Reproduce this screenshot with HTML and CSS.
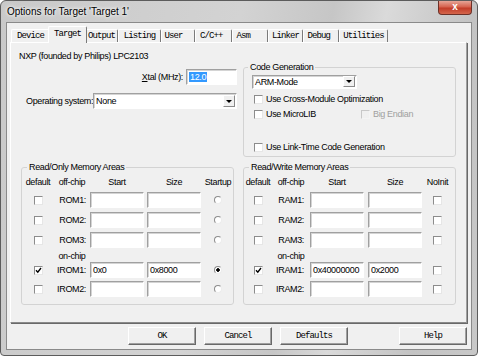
FILE: index.html
```html
<!DOCTYPE html>
<html lang="en">
<head>
  <meta charset="UTF-8">
  <meta name="viewport" content="width=device-width, initial-scale=1.0">
  <title>Options for Target 'Target 1'</title>
  <link rel="stylesheet" href="styles.css">
</head>
<body>
  <div class="window">
    <div class="titlebar">
      <span class="title">Options for Target 'Target 1'</span>
      <span class="close">x</span>
    </div>

    <div class="client">
      <div class="tabs">
        <span class="tab">Device</span>
        <span class="tab active">Target</span>
        <span class="tab">Output</span>
        <span class="tab">Listing</span>
        <span class="tab">User&nbsp;&nbsp;</span>
        <span class="tab">C/C++&nbsp;</span>
        <span class="tab">Asm&nbsp;&nbsp;&nbsp;</span>
        <span class="tab">Linker</span>
        <span class="tab">Debug&nbsp;</span>
        <span class="tab">Utilities</span>
      </div>

      <div class="panel">
        <div class="top">
          <div class="device">
            <div class="chip">NXP (founded by Philips) LPC2103</div>
            <div class="xtal-row">
              <label><u>X</u>tal (MHz):</label>
              <span class="edit xtal"><span class="sel">12.0</span></span>
            </div>
            <div class="os-row">
              <label>Operating system:</label>
              <span class="edit combo os"><span>None</span><span class="drop"><i></i></span></span>
            </div>
          </div>

          <fieldset class="group codegen">
            <legend>Code Generation</legend>
            <span class="edit combo mode"><span>ARM-Mode</span><span class="drop"><i></i></span></span>
            <div class="check-row first">
              <span class="check"><i class="cb"></i>Use Cross-Module Optimization</span>
            </div>
            <div class="check-row">
              <span class="check lib"><i class="cb"></i>Use MicroLIB</span>
              <span class="check off"><i class="cb"></i>Big Endian</span>
            </div>
            <div class="check-row last">
              <span class="check"><i class="cb"></i>Use Link-Time Code Generation</span>
            </div>
          </fieldset>
        </div>

        <div class="bottom">
          <fieldset class="group mem">
            <legend>Read/Only Memory Areas</legend>
            <div class="mem-grid ro">
              <span class="hd">default</span><span class="hd">off-chip</span><span class="hd col">Start</span><span class="hd col">Size</span><span class="hd">Startup</span>

              <span class="cell"><i class="cb"></i></span><span class="name">ROM1:</span><span class="edit"></span><span class="edit"></span><span class="cell"><i class="radio"></i></span>
              <span class="cell"><i class="cb"></i></span><span class="name">ROM2:</span><span class="edit"></span><span class="edit"></span><span class="cell"><i class="radio"></i></span>
              <span class="cell"><i class="cb"></i></span><span class="name">ROM3:</span><span class="edit"></span><span class="edit"></span><span class="cell"><i class="radio"></i></span>

              <span></span><span class="hd onchip">on-chip</span><span></span><span></span><span></span>

              <span class="cell"><i class="cb on"><svg width="7" height="7" viewBox="0 0 7 7"><path d="M1 3.2 L2.8 5.2 L6 1" fill="none" stroke="#000" stroke-width="1.4"/></svg></i></span><span class="name">IROM1:</span><span class="edit">0x0</span><span class="edit">0x8000</span><span class="cell"><i class="radio on"></i></span>
              <span class="cell"><i class="cb"></i></span><span class="name">IROM2:</span><span class="edit"></span><span class="edit"></span><span class="cell"><i class="radio"></i></span>
            </div>
          </fieldset>

          <fieldset class="group mem">
            <legend>Read/Write Memory Areas</legend>
            <div class="mem-grid rw">
              <span class="hd">default</span><span class="hd">off-chip</span><span class="hd col">Start</span><span class="hd col">Size</span><span class="hd">NoInit</span>

              <span class="cell"><i class="cb"></i></span><span class="name">RAM1:</span><span class="edit"></span><span class="edit"></span><span class="cell"><i class="cb"></i></span>
              <span class="cell"><i class="cb"></i></span><span class="name">RAM2:</span><span class="edit"></span><span class="edit"></span><span class="cell"><i class="cb"></i></span>
              <span class="cell"><i class="cb"></i></span><span class="name">RAM3:</span><span class="edit"></span><span class="edit"></span><span class="cell"><i class="cb"></i></span>

              <span></span><span class="hd onchip">on-chip</span><span></span><span></span><span></span>

              <span class="cell"><i class="cb on"><svg width="7" height="7" viewBox="0 0 7 7"><path d="M1 3.2 L2.8 5.2 L6 1" fill="none" stroke="#000" stroke-width="1.4"/></svg></i></span><span class="name">IRAM1:</span><span class="edit">0x40000000</span><span class="edit">0x2000</span><span class="cell"><i class="cb"></i></span>
              <span class="cell"><i class="cb"></i></span><span class="name">IRAM2:</span><span class="edit"></span><span class="edit"></span><span class="cell"><i class="cb"></i></span>
            </div>
          </fieldset>
        </div>
      </div>

      <div class="buttons">
        <button class="btn">OK</button>
        <button class="btn">Cancel</button>
        <button class="btn">Defaults</button>
        <button class="btn help">Help</button>
      </div>
    </div>
  </div>
</body>
</html>
```

FILE: styles.css
```css
body {
  margin: 0;
  font-family: "Liberation Sans", Arial, sans-serif;
  font-size: 9px;
  letter-spacing: -0.35px;
  color: #000;
}

.window {
  width: 478px;
  height: 356px;
  box-sizing: border-box;
  border: 1px solid #5c5c5c;
  border-radius: 6px 6px 4px 4px;
  overflow: hidden;
  background: linear-gradient(100deg, #c9c9c9 0%, #d3d3d3 45%, #c6c6c6 62%, #dadada 72%, #c3c3c3 88%, #c8c8c8 100%);
}

/* title bar */
.titlebar {
  height: 21px;
  display: flex;
  justify-content: space-between;
  align-items: flex-start;
  padding: 0 5px 0 6px;
}
.title {
  font-size: 10px;
  letter-spacing: 0;
  line-height: 22px;
  text-shadow: 0 0 5px #fff, 0 0 3px #fff;
}
.close {
  width: 34px;
  height: 14px;
  box-sizing: border-box;
  border: 1px solid #6d3128;
  border-top: none;
  border-radius: 0 0 4px 4px;
  background: linear-gradient(#e6a597, #d6634f 45%, #c23d29 55%, #d4664c);
  color: #fff;
  font-weight: bold;
  font-size: 10px;
  letter-spacing: 0;
  line-height: 12px;
  text-align: center;
}

.client {
  margin: 0 5px;
  height: 328px;
  box-sizing: border-box;
  border: 1px solid #8a8a8a;
  background: #f0f0f0;
}

/* tabs */
.tabs {
  display: flex;
  align-items: flex-end;
  height: 19px;
  padding-left: 4px;
}
.tab {
  box-sizing: border-box;
  height: 13px;
  border: 1px solid;
  border-color: #fff #7a7a7a transparent #fff;
  border-bottom: none;
  border-radius: 2px 2px 0 0;
  background: #f0f0f0;
  font-family: "Liberation Mono", monospace;
  font-size: 9px;
  letter-spacing: -0.9px;
  line-height: 12px;
  text-align: center;
  white-space: pre;
}
.tab:nth-child(1) { width: 39px; }
.tab:nth-child(2) { width: 39px; }
.tab:nth-child(3) { width: 33px; }
.tab:nth-child(4) { width: 43px; }
.tab:nth-child(5) { width: 34px; }
.tab:nth-child(6) { width: 37px; }
.tab:nth-child(7) { width: 36px; }
.tab:nth-child(8) { width: 35px; }
.tab:nth-child(9) { width: 36px; }
.tab:nth-child(10) { width: 49px; }
.tab.active {
  position: relative;
  z-index: 1;
  height: 17px;
  margin: 0 -2px -1px;
  line-height: 14px;
}

/* page */
.panel {
  width: 457px;
  height: 281px;
  margin-left: 3px;
  box-sizing: border-box;
  border: 1px solid;
  border-color: #fff #a0a0a0 #8a8a8a #fff;
  box-shadow: 1px 1px 0 #696969;
  white-space: nowrap;
}

.top {
  display: flex;
  height: 118px;
}
.device {
  width: 232px;
  box-sizing: border-box;
  padding: 7px 6px 0 8px;
}
.chip {
  line-height: 13px;
}
.xtal-row {
  display: flex;
  justify-content: flex-end;
  align-items: center;
  margin-top: 6px;
}
.xtal-row label {
  margin-right: 3px;
}
.os-row {
  display: flex;
  justify-content: space-between;
  align-items: center;
  margin-top: 8px;
  padding-left: 7px;
}

.edit {
  display: block;
  height: 16px;
  box-sizing: border-box;
  border: 1px solid;
  border-color: #a0a0a0 #fff #fff #a0a0a0;
  box-shadow: inset 1px 1px 0 #d4d4d4;
  background: #fff;
  padding: 1px 0 0 2px;
  line-height: 12px;
}
.xtal {
  width: 51px;
}
.sel {
  background: #3399ff;
  color: #fff;
  padding: 0 1px;
}
.combo {
  display: flex;
  justify-content: space-between;
  padding: 1px 1px 1px 2px;
}
.os {
  width: 145px;
}
.drop {
  display: flex;
  justify-content: center;
  align-items: center;
  width: 12px;
  box-sizing: border-box;
  border: 1px solid;
  border-color: #fff #8a8a8a #8a8a8a #fff;
  background: #f0f0f0;
}
.drop i {
  border-left: 3px solid transparent;
  border-right: 3px solid transparent;
  border-top: 3px solid #000;
}

/* group boxes */
.group {
  margin: 0;
  padding: 0;
  min-width: 0;
  box-sizing: border-box;
  border: 1px solid #d3d3d3;
  border-radius: 3px;
}
.group legend {
  margin-left: 4px;
  padding: 0 2px;
  line-height: 13px;
}
.codegen {
  width: 213px;
  height: 96px;
  margin-top: 18px;
  padding-left: 8px;
}
.codegen legend {
  margin-left: -4px;
}
.mode {
  width: 105px;
  height: 14px;
  margin-top: 1px;
  padding-top: 0;
}
.check-row {
  display: flex;
  height: 13px;
  margin-top: 2px;
  padding-left: 2px;
}
.check-row.first { margin-top: 4px; }
.check-row.last { margin-top: 20px; }
.check {
  display: flex;
  align-items: center;
  gap: 3px;
  line-height: 13px;
}
.check.lib { width: 107px; }
.check.off { color: #a0a0a0; }
.check.off .cb { border-color: #c8c8c8 #f4f4f4 #f4f4f4 #c8c8c8; background: #f0f0f0; }

.cb {
  display: flex;
  justify-content: center;
  align-items: center;
  width: 9px;
  height: 9px;
  box-sizing: border-box;
  border: 1px solid;
  border-color: #8c8c8c #e6e6e6 #e6e6e6 #8c8c8c;
  background: #fff;
}
.radio {
  display: block;
  width: 8px;
  height: 8px;
  box-sizing: border-box;
  border: 1px solid;
  border-color: #8c8c8c #ececec #ececec #8c8c8c;
  border-radius: 50%;
  background: #fff;
}
.radio.on {
  background: radial-gradient(circle, #000 0 1.5px, #fff 2px);
}

/* memory areas */
.bottom {
  display: flex;
  gap: 9px;
  padding-left: 10px;
}
.mem {
  width: 213px;
  height: 144px;
  padding: 2px 0 0;
}
.mem legend {
  margin-left: 5px;
}
.mem-grid {
  display: grid;
  grid-template-rows: 16px 20px 20px 18px 12px 19px 19px;
  align-items: start;
}
.mem-grid.ro {
  grid-template-columns: 32px 36px 57px 57px 28px;
}
.mem-grid.rw {
  grid-template-columns: 28px 38px 58px 58px 23px;
}
.hd {
  line-height: 13px;
  text-align: center;
}
.hd.col {
  width: 54px;
}
.hd.onchip {
  line-height: 12px;
}
.cell {
  display: flex;
  justify-content: center;
  align-items: center;
  height: 16px;
}
.name {
  display: flex;
  justify-content: flex-end;
  align-items: center;
  height: 16px;
  padding-right: 4px;
}
.rw .name {
  padding-right: 6px;
}
.mem-grid .edit {
  width: 54px;
}

/* buttons */
.buttons {
  display: flex;
  gap: 8px;
  margin-top: 4px;
  padding: 0 4px 0 121px;
}
.btn {
  width: 68px;
  height: 18px;
  padding: 0;
  border: 1px solid;
  border-color: #fff #696969 #696969 #fff;
  box-shadow: inset -1px -1px 0 #a0a0a0;
  background: #f0f0f0;
  font-family: "Liberation Mono", monospace;
  font-size: 9px;
  letter-spacing: -0.9px;
  color: #000;
}
.btn.help {
  margin-left: auto;
}
```
